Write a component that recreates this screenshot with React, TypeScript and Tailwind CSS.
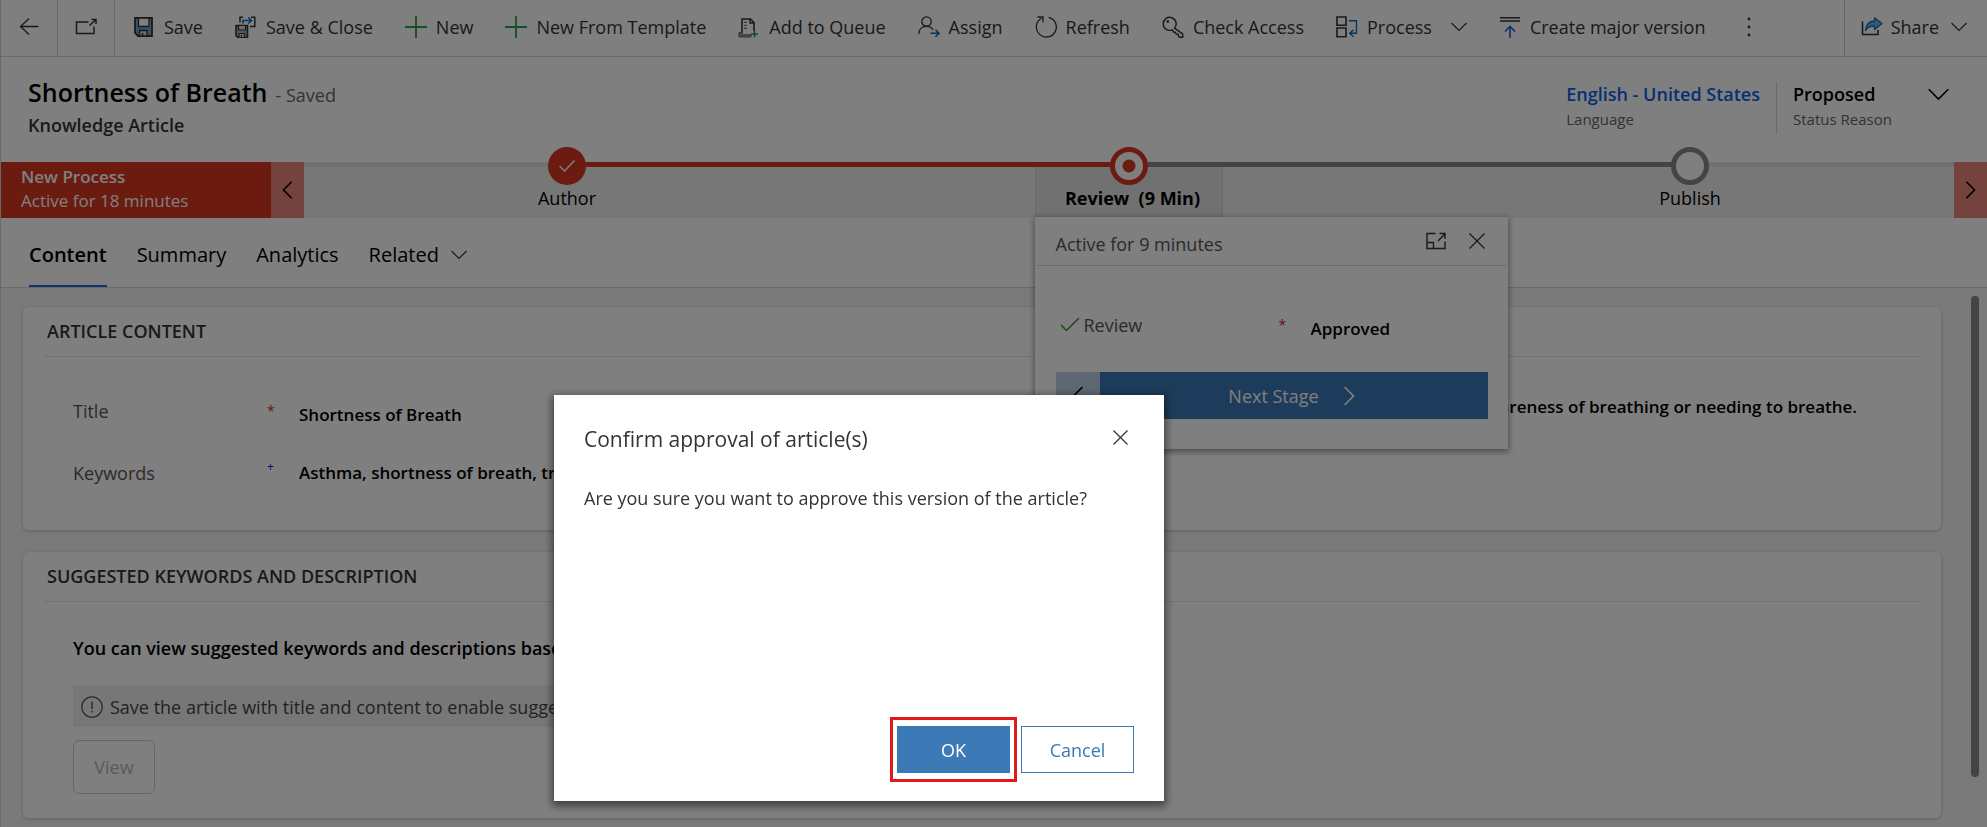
import type { ReactNode } from "react";

const ink = "#333333";
const blue = "#1468b8";

function Icon({ children, className = "size-[22px]" }: { children: ReactNode; className?: string }) {
  return (
    <svg viewBox="0 0 22 22" fill="none" stroke={ink} strokeWidth={1.3} className={`shrink-0 ${className}`} aria-hidden="true">
      {children}
    </svg>
  );
}

const BackIcon = () => (
  <Icon>
    <path d="M11 2.500 2.500 10.500l8.500 8M2.500 10.500h18" />
  </Icon>
);

const PopOutIcon = () => (
  <Icon>
    <path d="M13.500 6H1.500v11.500h17.500v-7" strokeWidth={1.5} />
    <path d="M14.500 9.500 21 3.500M16.500 3.500H21V8" strokeWidth={1.5} />
  </Icon>
);

const SaveIcon = () => (
  <Icon>
    <path d="M2 2h17v18H5L2 17z" fill="#6fa8d6" stroke={ink} strokeWidth={1.8} />
    <path d="M5.500 2h10.500v8.500h-10.500z" fill="#fff" stroke={ink} strokeWidth={1.3} />
    <path d="M6.500 14.500h7.500v5.500h-7.500z" fill="#ddd" stroke={ink} strokeWidth={1.3} />
    <path d="M9.500 17v3" strokeWidth={1.6} />
  </Icon>
);

const SaveCloseIcon = () => (
  <Icon>
    <path d="M1 9.500h11.500v12H3l-2-1.800z" fill="#8fb4d0" strokeWidth={1.6} />
    <path d="M3.500 9.500h7v4.500h-7z" fill="#ddd" strokeWidth={1.2} />
    <path d="M4 17.500h5.500v4H4zM6.500 18.500v3" fill="#eee" strokeWidth={1.2} />
    <path d="M5 6.500V1.200h3M16 1.200h3.800V10.500H15" strokeWidth={1.5} />
    <path d="M8 7.500V4.500h8.500M13.300 1.500l3.200 3-3.200 3" stroke={blue} strokeWidth={1.6} />
  </Icon>
);

const PlusIcon = () => (
  <Icon>
    <path d="M11 0v22M0 11h22" stroke="#2aa052" strokeWidth={1.8} />
  </Icon>
);

const QueueIcon = () => (
  <Icon>
    <path d="M4 17V3h8.500l3.500 3.500V15" strokeWidth={1.6} />
    <path d="M12 3v4h4" strokeWidth={1.4} />
    <path d="M6 6.300h3M6 9.300h3M6 12.300h3" stroke="#777" strokeWidth={1.3} />
    <path d="M1 16.500h3v2.300h9v2.200H1z" fill="#999" stroke="#666" strokeWidth={1} />
    <path d="M16.500 14.500v7M13 18h7" stroke="#1f9a4a" strokeWidth={1.6} />
  </Icon>
);

const AssignIcon = () => (
  <Icon>
    <circle cx="8.500" cy="5.500" r="4.700" />
    <path d="M.8 18c0-4.500 3-7.700 7.700-7.700 3 0 5.200 1.300 6.500 3.500" />
    <path d="M12.500 17.300h8.500M17.500 13.800l3.500 3.500-3.500 3.500" stroke={blue} strokeWidth={1.6} />
  </Icon>
);

const RefreshIcon = () => (
  <Icon>
    <path d="M13.500 1.300A10 10 0 1 1 6.500 2.300" />
    <path d="M2.500 1h5.500v5.500" />
  </Icon>
);

const KeyIcon = () => (
  <Icon>
    <path d="M12.500 12.200l8.200 5.600v3.500h-3.200l-1.200-1.700v-1.500h-2l-1-1.800h-1.500l-1.500-2.500A6.500 6.500 0 1 1 12.500 12.200z" strokeWidth={1.4} />
    <circle cx="5.800" cy="5.600" r="1" fill={ink} strokeWidth={0.8} />
  </Icon>
);

const ProcessIcon = () => (
  <Icon>
    <path d="M1 1h9v8.300H1zM1 12h9v8.800H1z" strokeWidth={1.6} />
    <path d="M12.800 4.800h7.700v12.500h-6M17.500 13.800l-3.800 3.500 3.800 3.500" stroke={blue} strokeWidth={1.4} />
  </Icon>
);

const VersionIcon = () => (
  <Icon>
    <path d="M1 1.800h20M1 5h20" strokeWidth={1.5} />
    <path d="M11 22V11M6 15.500l5-5 5 5" stroke={blue} strokeWidth={1.6} />
  </Icon>
);

const ShareIcon = () => (
  <Icon>
    <path d="M1.500 5.500V18.500h15.500v-4.500" strokeWidth={1.6} />
    <path d="M13.500 1.800 21 7.500l-7.500 6V10.200C9.500 10 6.500 11.500 4.500 14.500 5 8.500 8.500 5.300 13.500 5z" fill="#6fb2e0" stroke={blue} strokeWidth={1.3} strokeLinejoin="round" />
  </Icon>
);

function Chevron({ className = "w-4 h-2.5", stroke = ink, width = 1.2 }: { className?: string; stroke?: string; width?: number }) {
  return (
    <svg viewBox="0 0 16 10" fill="none" stroke={stroke} strokeWidth={width} className={`shrink-0 ${className}`} aria-hidden="true">
      <path d="M.5 1 8 8.500 15.500 1" />
    </svg>
  );
}

function SideChevron({ left = false, stroke = "#000", className = "w-3 h-5" }: { left?: boolean; stroke?: string; className?: string }) {
  return (
    <svg viewBox="0 0 12 20" fill="none" stroke={stroke} strokeWidth={1.7} className={`shrink-0 ${className}`} aria-hidden="true">
      <path d={left ? "M10.500 1 1.500 10l9 9" : "M1.500 1l9 9-9 9"} />
    </svg>
  );
}

function CloseIcon({ className }: { className: string }) {
  return (
    <svg viewBox="0 0 16 16" fill="none" stroke={ink} strokeWidth={1.3} className={className} aria-hidden="true">
      <path d="M.5.5l15 15M15.500.5l-15 15" />
    </svg>
  );
}

const commands: { label: string; icon: ReactNode; menu?: boolean }[] = [
  { label: "Save", icon: <SaveIcon /> },
  { label: "Save & Close", icon: <SaveCloseIcon /> },
  { label: "New", icon: <PlusIcon /> },
  { label: "New From Template", icon: <PlusIcon /> },
  { label: "Add to Queue", icon: <QueueIcon /> },
  { label: "Assign", icon: <AssignIcon /> },
  { label: "Refresh", icon: <RefreshIcon /> },
  { label: "Check Access", icon: <KeyIcon /> },
  { label: "Process", icon: <ProcessIcon />, menu: true },
  { label: "Create major version", icon: <VersionIcon /> },
];

function CommandBar() {
  return (
    <div role="toolbar" className="flex h-[57px] shrink-0 border-b border-[#d2d2d2] text-[#333333]">
      <button aria-label="Back" className="flex w-[57px] items-center justify-center border-r border-[#d2d2d2] pb-0.5">
        <BackIcon />
      </button>
      <button aria-label="Open in new window" className="flex w-[57px] items-center justify-center border-r border-[#d2d2d2] pb-0.5">
        <PopOutIcon />
      </button>
      <div className="flex flex-1 items-center gap-8 pb-0.5 pl-[18px]">
        {commands.map((c) => (
          <button key={c.label} className="flex items-center gap-[9px] whitespace-nowrap">
            {c.icon}
            {c.label}
            {c.menu && <Chevron className="ml-2.5 h-2.5 w-4" />}
          </button>
        ))}
        <button aria-label="More commands" className="ml-2.5">
          <svg viewBox="0 0 4 20" className="h-5 w-1" fill={ink} aria-hidden="true">
            <circle cx="2" cy="2" r="1.400" />
            <circle cx="2" cy="10" r="1.400" />
            <circle cx="2" cy="18" r="1.400" />
          </svg>
        </button>
      </div>
      <button className="flex items-center gap-2 border-l border-[#c8c8c8] pr-5 pb-0.5 pl-4">
        <ShareIcon />
        Share
        <Chevron className="ml-1 h-2.5 w-4" />
      </button>
    </div>
  );
}

function RecordHeader() {
  return (
    <header className="flex h-[105px] shrink-0 justify-between pr-[38px] pl-[27px]">
      <div className="pt-[19px]">
        <h1 className="flex items-baseline gap-2 text-[25px] leading-8 font-semibold text-black">
          Shortness of Breath
          <span className="text-lg leading-6 font-normal text-[#666666]">- Saved</span>
        </h1>
        <p className="mt-[5px] font-semibold text-[#333333]">Knowledge Article</p>
      </div>
      <div className="flex pt-[25px]">
        <div className="pr-4">
          <a href="#language" className="block font-semibold text-[#115ee8]">English - United States</a>
          <p className="text-[15px] leading-[26px] text-[#666666]">Language</p>
        </div>
        <div className="h-[52px] w-[152px] border-l border-[#d6d6d6] pl-4">
          <p className="font-semibold text-black">Proposed</p>
          <p className="text-[15px] leading-[26px] text-[#666666]">Status Reason</p>
        </div>
        <button aria-label="More header fields" className="flex h-6 items-center">
          <Chevron className="h-[13px] w-[21px]" stroke="#000" />
        </button>
      </div>
    </header>
  );
}

function StageFlyout() {
  return (
    <section aria-label="Review stage" className="absolute top-[55px] left-0 z-10 h-[232px] w-[473px] bg-white text-left shadow-[0_2px_6px_1px_rgba(0,0,0,0.4)]">
      <div className="mx-0.5 flex h-[49px] items-center justify-between border-b border-[#d2d2d2] pr-[21px] pl-[19px]">
        <h2 className="pt-1.5 text-[#555555]">Active for 9 minutes</h2>
        <div className="flex items-center gap-[23px]">
          <button aria-label="Dock">
            <svg viewBox="0 0 20 18" className="h-[18px] w-5" fill="none" stroke={ink} strokeWidth={1.4} aria-hidden="true">
              <path d="M9.500 1.500H1v15h18V9.500M1 10.500h6.500v6M12 9l7-7.300M13.500 1.500H19V7" />
            </svg>
          </button>
          <button aria-label="Close stage">
            <CloseIcon className="size-4" />
          </button>
        </div>
      </div>
      <div className="flex items-start pt-[47px] pr-5 pl-[25px]">
        <label htmlFor="review" className="flex w-[219px] items-center gap-1 text-[#555555]">
          <svg viewBox="0 0 20 16" className="h-4 w-5" fill="none" stroke="#3f8f2f" strokeWidth={1.5} aria-hidden="true">
            <path d="M1 8l5.500 5.500L19 1" />
          </svg>
          Review
        </label>
        <span className="w-8 text-sm leading-6 text-[#e01b24]">*</span>
        <select id="review" className="mt-1 appearance-none text-[17px] font-semibold text-black">
          <option>Approved</option>
        </select>
      </div>
      <div className="mx-[21px] mt-[31px] flex h-[47px] w-[432px]">
        <button aria-label="Previous stage" className="flex w-11 items-center justify-center bg-[#bdd0e6]">
          <SideChevron left />
        </button>
        <button className="flex flex-1 items-center justify-center gap-6 bg-[#3b77b5] pr-1 text-white">
          Next Stage
          <SideChevron stroke="#fff" />
        </button>
      </div>
    </section>
  );
}

function Stage({ label, left, right, marker, active, children }: { label: string; left: string; right: string; marker: ReactNode; active?: boolean; children?: ReactNode }) {
  return (
    <div className="relative h-full w-[188px] shrink-0">
      <div className="flex h-[5px]">
        <div className={`flex-1 ${left}`} />
        <div className={`flex-1 ${right}`} />
      </div>
      <div className={`flex h-[51px] flex-col items-center ${active ? "border border-t-0 border-[#d4d4d4] bg-[#e2e2e2]" : ""}`}>
        <div className="-mt-5 size-[38px] shrink-0">{marker}</div>
        <button className={`mt-px whitespace-pre text-black ${active ? "pl-2 font-bold" : ""}`}>{label}</button>
      </div>
      {children}
    </div>
  );
}

function ProcessFlow() {
  return (
    <div className="flex h-14 shrink-0 bg-[#efefef]">
      <div className="w-[270px] bg-[#d83722] pt-[3px] pl-5 text-[17px] leading-6 text-white">
        <p className="font-semibold">New Process</p>
        <p>Active for 18 minutes</p>
      </div>
      <button aria-label="Scroll stages back" className="flex w-[33px] items-center justify-center bg-[#e8877b]">
        <SideChevron left className="h-[18px] w-[11px]" />
      </button>
      <div className="flex flex-1">
        <div className="h-[5px] w-[169px] bg-[#e1e1e1]" />
        <Stage
          label="Author"
          left="bg-[#e1e1e1]"
          right="bg-[#d83722]"
          marker={
            <svg viewBox="0 0 38 38" className="size-full" fill="none" aria-hidden="true">
              <circle cx="19" cy="19" r="19" fill="#d83722" />
              <path d="M11.500 19l5 5L26.500 13.500" stroke="#fff" strokeWidth={1.5} />
            </svg>
          }
        />
        <div className="h-[5px] flex-1 bg-[#d83722]" />
        <Stage
          label="Review  (9 Min)"
          active
          left="bg-[#d83722]"
          right="bg-[#8a8886]"
          marker={
            <svg viewBox="0 0 38 38" className="size-full" aria-hidden="true">
              <circle cx="19" cy="19" r="16.500" fill="#fff" stroke="#d83722" strokeWidth={5} />
              <circle cx="19" cy="19" r="6.500" fill="#d83722" />
            </svg>
          }
        >
          <StageFlyout />
        </Stage>
        <div className="h-[5px] flex-1 bg-[#8a8886]" />
        <Stage
          label="Publish"
          left="bg-[#8a8886]"
          right="bg-[#e1e1e1]"
          marker={
            <svg viewBox="0 0 38 38" className="size-full" aria-hidden="true">
              <circle cx="19" cy="19" r="16.500" fill="#fff" stroke="#8a8886" strokeWidth={5} />
            </svg>
          }
        />
        <div className="h-[5px] w-[170px] bg-[#e1e1e1]" />
      </div>
      <button aria-label="Scroll stages forward" className="flex w-[33px] items-center justify-center bg-[#e8877b]">
        <SideChevron className="h-[18px] w-[11px]" />
      </button>
    </div>
  );
}

function Tabs() {
  return (
    <nav className="flex h-[70px] shrink-0 gap-[30px] border-b border-[#d2d2d2] pl-7 text-xl leading-7 text-black">
      <button className="border-b-2 border-[#2266e3] pt-1.5 font-semibold">Content</button>
      <button className="border-b-2 border-transparent pt-1.5">Summary</button>
      <button className="border-b-2 border-transparent pt-1.5">Analytics</button>
      <button className="flex items-center gap-3 border-b-2 border-transparent pt-1.5">
        Related
        <Chevron />
      </button>
    </nav>
  );
}

function Card({ title, children }: { title: string; children: ReactNode }) {
  return (
    <section className="rounded-md bg-white px-[21px] shadow-[0_1px_4px_rgba(0,0,0,0.2)]">
      <h2 className="border-b border-[#e6e6e6] pt-3 pb-[13px] pl-[3px] font-semibold text-[#333333]">{title}</h2>
      {children}
    </section>
  );
}

function Content() {
  return (
    <main className="flex min-h-0 flex-1 overflow-hidden bg-[#f5f5f5]">
      <div className="flex flex-1 flex-col gap-[22px] pt-[19px] pl-[22px]">
        <Card title="ARTICLE CONTENT">
          <div className="flex h-[173px] pl-[29px]">
            <div className="flex w-[194px] flex-col gap-[38px] pt-[42px] text-[#555555]">
              <label htmlFor="title">Title</label>
              <label htmlFor="keywords">Keywords</label>
            </div>
            <div className="flex w-8 flex-col gap-8 pt-[42px] text-sm leading-6">
              <span className="text-[#e01b24]">*</span>
              <span className="text-xs leading-6 text-[#1414c8]">+</span>
            </div>
            <div className="flex w-[420px] flex-col gap-[34px] pt-[46px] text-[17px] leading-6 font-semibold text-black">
              <input id="title" className="h-6" defaultValue="Shortness of Breath" />
              <input id="keywords" className="h-6" defaultValue="Asthma, shortness of breath, trouble breathing" />
            </div>
            <p className="flex-1 pt-[38px] pr-[63px] text-right text-[17px] leading-6 font-semibold text-black">
              Awareness of breathing or needing to breathe.
            </p>
          </div>
        </Card>
        <Card title="SUGGESTED KEYWORDS AND DESCRIPTION">
          <div className="pt-[34px] pb-6 pl-[29px]">
            <p className="font-semibold text-black">You can view suggested keywords and descriptions based on the article</p>
            <p className="mt-[25px] flex h-[42px] w-[640px] items-center gap-[7px] bg-[#efefef] pt-0.5 pl-2 text-[#444444]">
              <svg viewBox="0 0 22 22" className="size-[22px]" fill="none" stroke="#555" strokeWidth={1.2} aria-hidden="true">
                <circle cx="11" cy="11" r="10.200" />
                <path d="M11 5.500v7.500M11 14.800v1.700" strokeWidth={1.5} />
              </svg>
              Save the article with title and content to enable suggestions
            </p>
            <button disabled className="mt-[13px] h-[54px] w-[82px] rounded-md border border-[#cccccc] text-[#b4b4b4]">View</button>
          </div>
        </Card>
      </div>
      <div className="w-[46px] pt-2 pl-[30px]">
        <div className="h-[481px] w-2 rounded-full bg-[#8a8886]" />
      </div>
    </main>
  );
}

function ConfirmDialog() {
  return (
    <div className="fixed inset-0 z-20 bg-black/50">
      <div
        role="dialog"
        aria-labelledby="confirm-title"
        className="absolute top-[395px] left-[554px] flex h-[406px] w-[610px] flex-col bg-white px-[30px] pb-[19px] text-[#333333] shadow-[0_3px_8px_2px_rgba(0,0,0,0.5)]"
      >
        <div className="flex items-start justify-between pt-7 pr-1.5">
          <h2 id="confirm-title" className="text-[21px] leading-8">Confirm approval of article(s)</h2>
          <button aria-label="Close" className="pt-[7px]">
            <CloseIcon className="size-[15px]" />
          </button>
        </div>
        <p className="mt-[31px]">Are you sure you want to approve this version of the article?</p>
        <div className="mt-auto flex items-center justify-end gap-1">
          <div className="border-3 border-[#e31818] px-1 py-1.5">
            <button className="block h-[47px] w-[113px] bg-[#3b79b7] text-white">OK</button>
          </div>
          <button className="h-[47px] w-[113px] border border-[#3b79b7] text-[#3b79b7]">Cancel</button>
        </div>
      </div>
    </div>
  );
}

export default function App() {
  return (
    <div className="flex h-screen flex-col overflow-hidden border-l border-[#d2d2d2] bg-white font-['Open_Sans',sans-serif] text-lg leading-6">
      <CommandBar />
      <RecordHeader />
      <ProcessFlow />
      <Tabs />
      <Content />
      <ConfirmDialog />
    </div>
  );
}
